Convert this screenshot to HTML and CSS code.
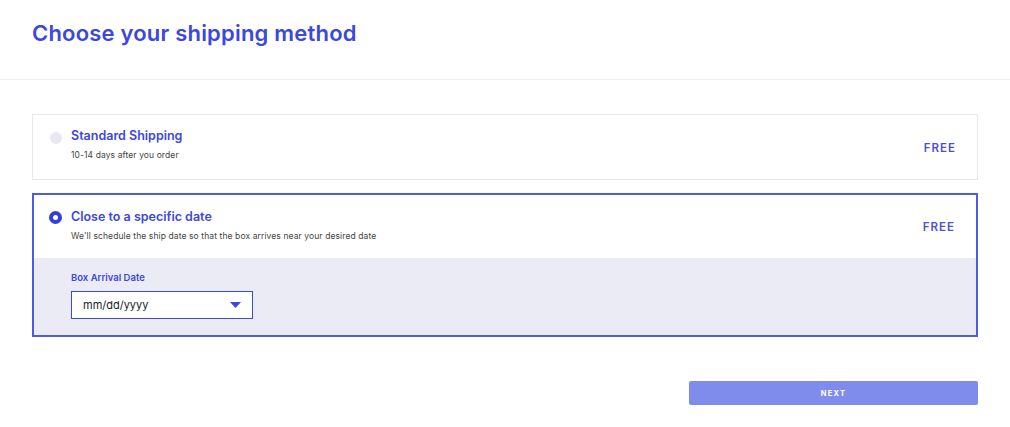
FILE: index.html
```html
<!DOCTYPE html>
<html lang="en">
<head>
    <meta charset="UTF-8">
    <title>Shipping Method</title>
    <link rel="stylesheet" href="styles.css">
</head>
<body>
    <header class="page-header">
        <h1>Choose your shipping method</h1>
    </header>

    <main class="content">
        <label class="option">
            <div class="option-row">
                <span class="radio"></span>
                <div class="option-text">
                    <div class="option-title">Standard Shipping</div>
                    <div class="option-desc">10-14 days after you order</div>
                </div>
                <div class="price">FREE</div>
            </div>
        </label>

        <div class="option selected">
            <div class="option-row">
                <span class="radio"></span>
                <div class="option-text">
                    <div class="option-title">Close to a specific date</div>
                    <div class="option-desc">We'll schedule the ship date so that the box arrives near your desired date</div>
                </div>
                <div class="price">FREE</div>
            </div>
            <div class="date-section">
                <div class="field-label">Box Arrival Date</div>
                <div class="date-input">
                    <span>mm/dd/yyyy</span>
                    <svg width="11" height="6" viewBox="0 0 11 6"><path d="M0 0 H11 L5.5 6 Z" fill="#3d49dc"/></svg>
                </div>
            </div>
        </div>

        <div class="actions">
            <button class="btn">NEXT</button>
        </div>
    </main>
</body>
</html>
```

FILE: styles.css
```css
body {
    font-family: Inter, "Open Sans", sans-serif;
    background: #fff;
    margin: 0;
    color: #333;
}
.page-header {
    padding: 20px 32px 0;
    height: 59px;
    border-bottom: 1px solid #f0f0f3;
}
.page-header h1 {
    margin: 0;
    font-size: 22px;
    font-weight: 600;
    color: #3c47dc;
    letter-spacing: 0.2px;
}
.content {
    padding: 34px 32px 0;
}
.option {
    display: block;
    border: 1px solid #e8e8ec;
    margin-bottom: 13px;
}
.option.selected {
    border: 2px solid #4e5ce0;
}
.option-row {
    display: flex;
    align-items: flex-start;
    padding: 13px 21px 10px 17px;
    height: 41px;
}
.selected .option-row {
    padding: 14px 21px 10px 15px;
    height: 39px;
}
.radio {
    width: 12px;
    height: 12px;
    border-radius: 50%;
    background: #e8e8f1;
    margin-top: 4px;
    margin-right: 9px;
    flex-shrink: 0;
    box-sizing: border-box;
}
.selected .radio {
    width: 13px;
    height: 13px;
    margin-top: 2px;
    background: #fff;
    border: 4px solid #3340d8;
}
.option-text {
    flex: 1;
}
.option-title {
    font-size: 12.5px;
    font-weight: 600;
    color: #3c47dc;
}
.option-desc {
    font-size: 8.5px;
    color: #444;
    margin-top: 7px;
    letter-spacing: 0.1px;
}
.price {
    font-size: 11.5px;
    font-weight: 600;
    color: #4f4fd8;
    letter-spacing: 1px;
    margin-top: 13px;
}
.selected .price {
    margin-top: 11px;
}
.date-section {
    background: #ebebf5;
    padding: 14px 0 16px 37px;
}
.field-label {
    font-size: 9.5px;
    font-weight: 600;
    color: #3c47dc;
    margin-bottom: 8px;
}
.date-input {
    display: flex;
    align-items: center;
    justify-content: space-between;
    box-sizing: border-box;
    width: 182px;
    height: 28px;
    background: #fff;
    border: 1px solid #3d49dc;
    padding: 0 11px;
    font-size: 11px;
    color: #222;
}
.actions {
    display: flex;
    justify-content: flex-end;
    margin-top: 44px;
}
.btn {
    width: 289px;
    height: 24px;
    border: none;
    border-radius: 2px;
    background: #7f8ceb;
    color: #fff;
    font-family: Inter, sans-serif;
    font-size: 7.5px;
    font-weight: 700;
    letter-spacing: 1.2px;
    cursor: pointer;
}
```
